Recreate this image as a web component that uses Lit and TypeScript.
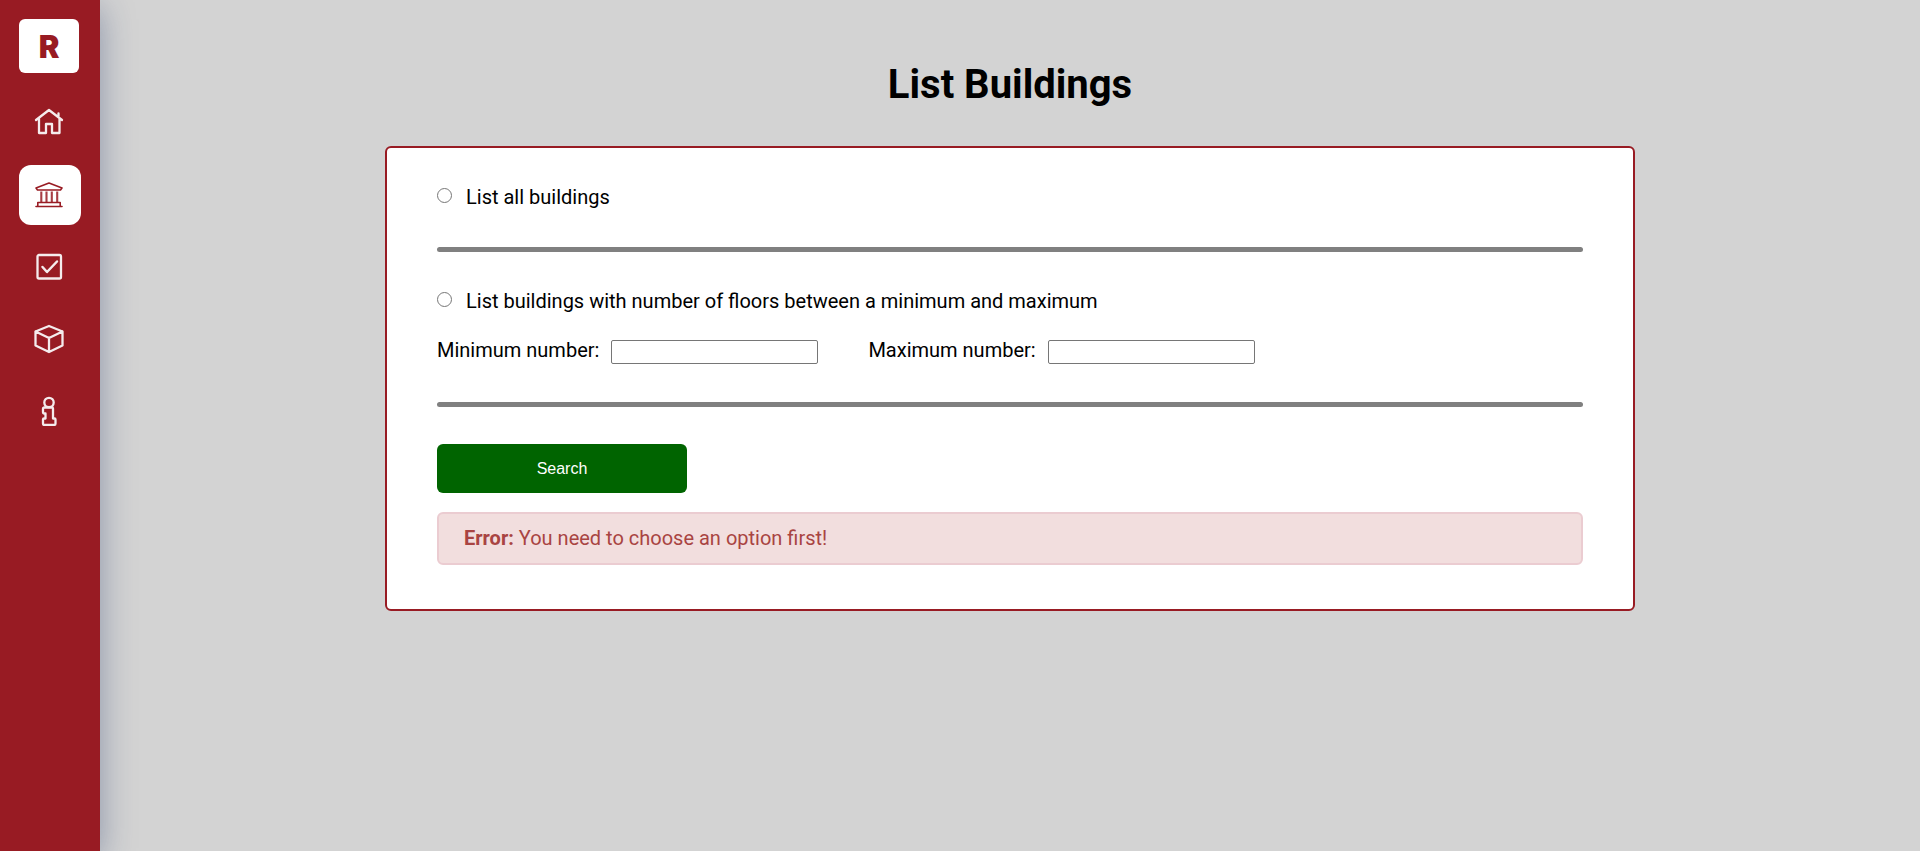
import { LitElement, html, css, svg } from "lit";
import { customElement, state } from "lit/decorators.js";

const icons = {
  home: svg`<path d="M2 12 15 2l13 10M5 10.500v14.500h7v-9h6v9h7.500V10.500M24.500 8V5.500"/>`,
  institution: svg`<path stroke-width="1.600" d="M15 3 2 8l1.500 2h23L28 8zM3.800 25.500v-3h22.400v3M2 26.500h26"/><path stroke-width="2.100" stroke-opacity="0.850" stroke-linecap="butt" d="M7.300 11.500v10.500M12.500 11.500v10.500M17.800 11.500v10.500M23.200 11.500v10.500"/>`,
  check: svg`<rect x="3.500" y="3" width="23.500" height="23.500" rx="1.500"/><path stroke-width="2.500" d="m8.500 15 4.500 5L23 9.500"/>`,
  cube: svg`<path d="M15 2 28.500 7.500v14L15 28 1.500 21.500v-14zM1.500 7.500 15 14l13.500-6.500M15 14v14"/>`,
  info: svg`<circle cx="15" cy="6.500" r="4.700"/><path d="M11 11.500h7q1 0 1 1v10h1.500q1 0 1 1v4q0 1.500-1.500 1.500h-9.500q-1.500 0-1.500-1.500v-4q0-1 1-1H11.500v-5H10q-1 0-1-1v-3.500q0-1.500 1.500-1.500z"/>`,
};

const links = [
  { label: "Home", icon: icons.home },
  { label: "Buildings", icon: icons.institution, active: true },
  { label: "Tasks", icon: icons.check },
  { label: "Packages", icon: icons.cube },
  { label: "About", icon: icons.info },
];

@customElement("side-nav")
export class SideNav extends LitElement {
  static styles = css`
    :host {
      box-sizing: border-box;
      width: 100px;
      flex: none;
      padding: 19px;
      background: #981b23;
      box-shadow: 0 8px 32px rgba(31, 52, 104, 0.4);
    }
    .logo {
      box-sizing: border-box;
      display: flex;
      align-items: center;
      justify-content: center;
      width: 60px;
      height: 54px;
      padding-top: 2px;
      border-radius: 6px;
      background: #fff;
      color: #981b23;
      font: 900 31px/36px Inter, sans-serif;
      text-decoration: none;
    }
    .links {
      display: grid;
      gap: 12px;
      margin-top: 20px;
    }
    .link {
      padding: 15px;
      height: 30px;
      border-radius: 12px;
      color: #f5eced;
    }
    .active {
      background: #fff;
      color: #981b23;
    }
    .icon {
      display: block;
      width: 30px;
      height: 30px;
      fill: none;
      stroke: currentColor;
      stroke-width: 2.3;
      stroke-linejoin: round;
      stroke-linecap: round;
    }
  `;

  render() {
    return html`
      <a class="logo" href="#">R</a>
      <nav class="links">
        ${links.map(
          (l) => html`<a class="link ${l.active ? "active" : ""}" href="#" aria-label=${l.label}>
            <svg class="icon" viewBox="0 0 30 30" aria-hidden="true">${l.icon}</svg>
          </a>`
        )}
      </nav>
    `;
  }
}

@customElement("app-root")
export class AppRoot extends LitElement {
  @state() private error = "You need to choose an option first!";

  static styles = css`
    :host {
      display: flex;
      min-height: 100vh;
      background: #d3d3d3;
      color: #000;
      font: 20px/23px Roboto, sans-serif;
    }
    .page {
      flex: 1;
      display: flex;
      flex-direction: column;
      align-items: center;
      padding: 61px 20px;
    }
    .title {
      margin: 0 0 37px;
      font-size: 40px;
      line-height: 48px;
      font-weight: 700;
    }
    .card {
      box-sizing: border-box;
      width: 100%;
      max-width: 1250px;
      padding: 0 50px;
      border: 2px solid #981b23;
      border-radius: 6px;
      background: #fff;
    }
    .section {
      padding: 38px 0;
      border: 0;
    }
    .option {
      display: flex;
      align-items: flex-start;
      gap: 14px;
    }
    .radio {
      width: 15px;
      height: 15px;
      margin: 2px 0 0;
    }
    .fields {
      display: flex;
      flex-wrap: wrap;
      gap: 20px 50px;
      margin-top: 26px;
    }
    .field {
      display: flex;
      gap: 12px;
    }
    .input {
      box-sizing: border-box;
      width: 207px;
      height: 24px;
      margin: 1px 0 0;
      padding: 1px 2px;
      border: 1px solid #767676;
      border-radius: 2px;
      background: #fff;
      font: 16px "Liberation Sans", Arial, sans-serif;
    }
    .rule {
      height: 5px;
      margin: 0;
      border: 0;
      border-radius: 3px;
      background: #808080;
    }
    .actions {
      padding: 37px 0 44px;
    }
    .search {
      display: block;
      width: 250px;
      height: 49px;
      border: 0;
      border-radius: 6px;
      background: #006400;
      color: #fff;
      font: 16px "Liberation Sans", Arial, sans-serif;
    }
    .alert {
      margin-top: 19px;
      padding: 13px 25px;
      border: 2px solid #ebccd1;
      border-radius: 6px;
      background: #f2dede;
      color: #a94442;
    }
  `;

  private submit(e: Event) {
    e.preventDefault();
    const form = new FormData(e.target as HTMLFormElement);
    this.error = form.has("mode") ? "" : "You need to choose an option first!";
  }

  render() {
    return html`
      <side-nav></side-nav>
      <main class="page">
        <h1 class="title">List Buildings</h1>
        <form class="card" @submit=${this.submit}>
          <div class="section">
            <div class="option">
              <input class="radio" type="radio" name="mode" value="all" id="all" />
              <label for="all">List all buildings</label>
            </div>
          </div>
          <hr class="rule" />
          <div class="section">
            <div class="option">
              <input class="radio" type="radio" name="mode" value="floors" id="floors" />
              <label for="floors">List buildings with number of floors between a minimum and maximum</label>
            </div>
            <div class="fields">
              <div class="field">
                <label for="min">Minimum number:</label>
                <input class="input" id="min" name="min" type="number" />
              </div>
              <div class="field">
                <label for="max">Maximum number:</label>
                <input class="input" id="max" name="max" type="number" />
              </div>
            </div>
          </div>
          <hr class="rule" />
          <div class="actions">
            <button class="search" type="submit">Search</button>
            ${this.error
              ? html`<div class="alert" role="alert"><strong>Error:</strong> ${this.error}</div>`
              : ""}
          </div>
        </form>
      </main>
    `;
  }
}
